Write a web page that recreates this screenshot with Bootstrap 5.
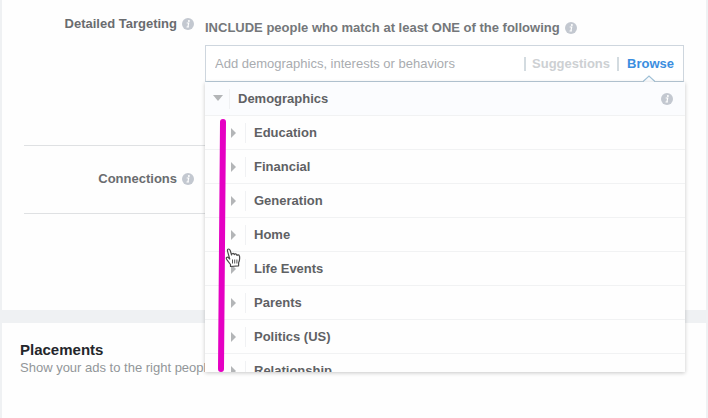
<!DOCTYPE html>
<html lang="en">
<head>
<meta charset="utf-8">
<meta name="viewport" content="width=device-width, initial-scale=1">
<title>Ad set</title>
<link href="https://cdn.jsdelivr.net/npm/bootstrap@5.3.0/dist/css/bootstrap.min.css" rel="stylesheet">
<style>
body{background:#eff1f3;font-family:"Liberation Sans",Arial,sans-serif;font-size:13px;line-height:18px;color:#63666a;min-height:100vh;overflow:hidden}
.page{min-height:100vh;padding:0 2px;gap:13px}
.panel{background:#fefefe}
.audience{padding:0 22px 96px}
.field-row{border-bottom:1px solid #dfe1e3;gap:11px}
.field-label{width:170px;gap:5px;color:#6a6c6f}
.targeting{padding:15px 0 63px}
.connections{padding:24px 0 25px}
.info{width:12px;height:12px;flex:none;display:block}
.include{padding-top:4px;margin-bottom:8px;gap:5px;color:#74777a}
.picker{border:1px solid #ced6de;border-bottom-color:#b9cbd8;background:#fff;height:37px}
.picker input{font-size:13px;line-height:18px;padding:0 9px;color:#555;background:none}
.picker input::placeholder{color:#a9acb0;opacity:1}
.tab{border:0;background:none;padding:0 9px 0 8px;line-height:14px;font-weight:700;color:#cdd0d3;border-left:2px solid #d3dbe0}
.tab-suggest{padding:0 7px 0 6px}
.tab.active{color:#3b8ee0}
.caret-up{right:29px;bottom:0;width:12px;height:7px}
.tree{top:100%;left:0;right:-1px;height:290px;overflow:hidden;background:#fefefe;z-index:5}
.tree-shadow{box-shadow:0 1px 4px rgba(0,0,0,.22)}
.node{height:34px;border:0;border-bottom:1px solid #f1f2f3;background:none;color:#5f6164;padding:0 12px 0 24px;font-weight:700}
.node-root{background:#fbfcfe;padding-left:8px}
.arrow{width:10px;height:10px;flex:none}
.node-name{border-left:1px solid #f0f1f3;line-height:20px;padding-left:8px;margin-left:6px}
.placements{padding:18px 18px 24px}
.placements h2{font-size:15px;line-height:18px;color:#24262b}
.hint{color:#929699}
.stroke{left:13px;top:37px;width:10px;height:253px;z-index:6}
.hand{left:20px;top:166px;width:16px;height:20px;z-index:7}
</style>
<script src="https://cdn.jsdelivr.net/npm/bootstrap@5.3.0/dist/js/bootstrap.bundle.min.js"></script>
</head>
<body>
<svg class="d-none" aria-hidden="true">
<symbol id="i" viewBox="0 0 12 12"><circle cx="6" cy="6" r="6" fill="#c3c8d0"/><circle cx="6.9" cy="2.9" r="1" fill="#fff"/><path d="M4.7 5h2L5.900 8.900h1M4.500 9h2.300" fill="none" stroke="#fff" stroke-width="1.200"/></symbol>
<symbol id="right" viewBox="0 0 10 10"><path d="M2 0v10l5-5z" fill="#b3b5b7"/></symbol>
<symbol id="down" viewBox="0 0 10 10"><path d="M0 1h10L5 7z" fill="#b3b5b7"/></symbol>
</svg>
<main class="page d-flex flex-column">
<section class="panel audience">
<div class="field-row targeting d-flex align-items-start">
<label for="target" class="field-label d-flex justify-content-end align-items-center fw-bold">Detailed Targeting <svg class="info"><use href="#i"/></svg></label>
<div class="flex-grow-1">
<div class="include d-flex align-items-center fw-bold">INCLUDE people who match at least ONE of the following <svg class="info"><use href="#i"/></svg></div>
<div class="position-relative">
<div class="picker d-flex align-items-center">
<input id="target" type="text" class="flex-grow-1 border-0" placeholder="Add demographics, interests or behaviors">
<button type="button" class="tab tab-suggest">Suggestions</button>
<button type="button" class="tab active">Browse</button>
</div>
<svg class="caret-up position-absolute" viewBox="0 0 12 7"><path d="M0 7 6 1l6 6z" fill="#fbfcfe"/><path d="M0 6.500 6 1l6 5.500" fill="none" stroke="#9fc0d6" stroke-width="1.200"/></svg>
<div class="tree tree-shadow position-absolute d-flex flex-column">
<button type="button" class="node node-root d-flex flex-shrink-0 align-items-center"><svg class="arrow"><use href="#down"/></svg><span class="node-name">Demographics</span><svg class="info ms-auto"><use href="#i"/></svg></button>
<button type="button" class="node d-flex flex-shrink-0 align-items-center"><svg class="arrow"><use href="#right"/></svg><span class="node-name">Education</span></button>
<button type="button" class="node d-flex flex-shrink-0 align-items-center"><svg class="arrow"><use href="#right"/></svg><span class="node-name">Financial</span></button>
<button type="button" class="node d-flex flex-shrink-0 align-items-center"><svg class="arrow"><use href="#right"/></svg><span class="node-name">Generation</span></button>
<button type="button" class="node d-flex flex-shrink-0 align-items-center"><svg class="arrow"><use href="#right"/></svg><span class="node-name">Home</span></button>
<button type="button" class="node d-flex flex-shrink-0 align-items-center"><svg class="arrow"><use href="#right"/></svg><span class="node-name">Life Events</span></button>
<button type="button" class="node d-flex flex-shrink-0 align-items-center"><svg class="arrow"><use href="#right"/></svg><span class="node-name">Parents</span></button>
<button type="button" class="node d-flex flex-shrink-0 align-items-center"><svg class="arrow"><use href="#right"/></svg><span class="node-name">Politics (US)</span></button>
<button type="button" class="node d-flex flex-shrink-0 align-items-center"><svg class="arrow"><use href="#right"/></svg><span class="node-name">Relationship</span></button>
<svg class="stroke position-absolute" viewBox="0 0 10 253"><path d="M5 3 3 250" stroke="#e500c3" stroke-width="6" stroke-linecap="round"/></svg>
<svg class="hand position-absolute" viewBox="0 0 16 20"><path d="M5.500 18.500v-2L2.200 12.200C1 10.600 1 9.500 2 9.200c1-.2 1.800.6 2.700 1.800L2.600 3.300C2.200 1.800 2.800 1 3.600 1s1.300.6 1.600 1.500L6.600 7c-.1-1.700 2.300-2.200 2.700-.3.300-1.300 2.500-1.200 2.700.7.500-1 2.300-.8 2.500.8.400 2.600.3 4.300-.9 6.500v3.100z" fill="#fff" stroke="#4a4a4a" stroke-width="1.200" stroke-linejoin="round"/><path d="M7.500 11.500v4M9.700 11.500v4M11.900 11.500v4" stroke="#555"/></svg>
</div>
</div>
</div>
</div>
<div class="field-row connections d-flex">
<div class="field-label d-flex justify-content-end align-items-center fw-bold">Connections <svg class="info"><use href="#i"/></svg></div>
</div>
</section>
<section class="panel placements flex-grow-1">
<h2 class="fw-bold mb-0">Placements</h2>
<p class="hint mb-0">Show your ads to the right people</p>
</section>
</main>
</body>
</html>
